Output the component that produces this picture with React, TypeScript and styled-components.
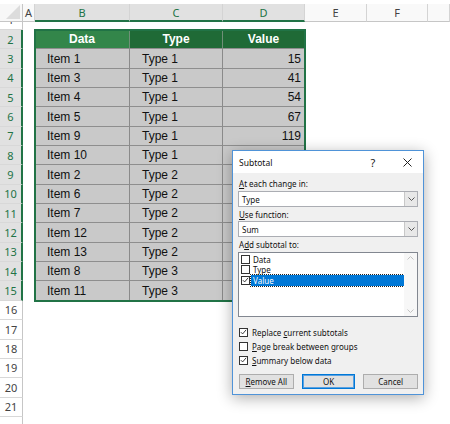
import { Fragment } from "react";
import styled, { createGlobalStyle } from "styled-components";

const GlobalStyle = createGlobalStyle`
  html, body {
    margin: 0;
    padding: 0;
    background: #ffffff;
  }
  body {
    width: 450px;
    height: 424px;
    overflow: hidden;
    font-family: "Liberation Sans", Arial, sans-serif;
  }
`;

const ROW_H = 19.35;
const GREEN = "#217346";
const UI_FONT = `"Noto Sans", "Open Sans", sans-serif`;

const Screen = styled.div`
  position: relative;
  width: 450px;
  height: 424px;
  overflow: hidden;
  background: #ffffff;
`;

const Sheet = styled.div`
  display: grid;
  grid-template-columns: 23px 12px 95px 93px 82px 62px 61px 1fr;
  grid-template-rows: 4px 18px 8px repeat(21, ${ROW_H}px);
`;

const TopGap = styled.div`
  grid-column: 1 / -1;
`;

const Corner = styled.div`
  position: relative;
  background: #f7f7f7;
  border-right: 1px solid #c6c6c6;
  border-bottom: 1px solid #c6c6c6;
  box-sizing: border-box;
  &::after {
    content: "";
    position: absolute;
    right: 2px;
    bottom: 2px;
    width: 0;
    height: 0;
    border-left: 14px solid transparent;
    border-bottom: 14px solid #dcdcdc;
  }
`;

const ColHead = styled.div<{ $sel?: boolean }>`
  box-sizing: border-box;
  display: flex;
  align-items: center;
  justify-content: center;
  font-family: ${UI_FONT};
  font-size: 11px;
  color: ${(p) => (p.$sel ? GREEN : "#444")};
  background: ${(p) => (p.$sel ? "#e1e1e1" : "#f9f9f9")};
  border-right: 1px solid #d4d4d4;
  border-bottom: ${(p) => (p.$sel ? `2px solid ${GREEN}` : "1px solid #c6c6c6")};
`;

const RowHead = styled.div<{ $sel?: boolean; $partial?: boolean }>`
  box-sizing: border-box;
  display: flex;
  justify-content: center;
  align-items: ${(p) => (p.$partial ? "flex-end" : "center")};
  overflow: hidden;
  font-family: ${UI_FONT};
  font-size: 11px;
  color: ${(p) => (p.$sel ? GREEN : "#444")};
  background: ${(p) => (p.$sel ? "#e1e1e1" : "#ffffff")};
  border-right: ${(p) => (p.$sel ? `2px solid ${GREEN}` : "1px solid #c6c6c6")};
  border-bottom: 1px solid #d8d8d8;
`;

const RowNum = styled.span`
  flex-shrink: 0;
  line-height: ${ROW_H}px;
`;

const Cell = styled.div`
  background: #ffffff;
`;

const DataTable = styled.div`
  grid-column: 3 / 6;
  grid-row: 4 / span 14;
  display: grid;
  grid-template-columns: 95px 93px 82px;
  grid-template-rows: repeat(14, 1fr);
  outline: 2px solid ${GREEN};
  outline-offset: -1px;
  position: relative;
  z-index: 1;
`;

const HeadCell = styled.div<{ $active?: boolean }>`
  box-sizing: border-box;
  display: flex;
  align-items: center;
  justify-content: center;
  font-size: 12px;
  font-weight: bold;
  color: #ffffff;
  background: ${(p) => (p.$active ? "#33864a" : "#1f6a36")};
  border-right: 1px solid #6f8f78;
  border-bottom: 1px solid #8e8e8e;
`;

const DataCell = styled.div<{ $num?: boolean; $first?: boolean }>`
  box-sizing: border-box;
  display: flex;
  align-items: center;
  justify-content: ${(p) => (p.$num ? "flex-end" : "flex-start")};
  padding: ${(p) => (p.$num ? "0 3px 0 0" : "0 0 0 12px")};
  font-size: 12px;
  color: #111;
  background: #c9c9c9;
  border-right: 1px solid #8a8a8a;
  border-bottom: 1px solid #8e8e8e;
  box-shadow: ${(p) => (p.$first ? "inset 1px 0 0 #f4f4f4" : "none")};
`;

/* ---------- dialog ---------- */

const Dialog = styled.div`
  position: absolute;
  left: 232px;
  top: 150px;
  width: 192px;
  height: 245px;
  box-sizing: border-box;
  border: 1px solid #4f93d8;
  background: #f0f0f0;
  box-shadow: 0 3px 14px rgba(0, 0, 0, 0.32);
  display: flex;
  flex-direction: column;
  font-family: ${UI_FONT};
  font-size: 8px;
  color: #111;
  z-index: 5;
`;

const TitleBar = styled.div`
  height: 22px;
  flex-shrink: 0;
  background: #ffffff;
  display: flex;
  align-items: center;
  padding-left: 6px;
`;

const Title = styled.div`
  flex: 1;
  font-size: 8.5px;
  color: #111;
`;

const TitleButton = styled.div<{ $w: number }>`
  width: ${(p) => p.$w}px;
  height: 22px;
  display: flex;
  align-items: center;
  justify-content: center;
  font-size: 11px;
  color: #222;
`;

const Body = styled.div`
  flex: 1;
  display: flex;
  flex-direction: column;
  padding: 0 5px 0 5px;
`;

const Label = styled.div<{ $mt: number }>`
  margin-top: ${(p) => p.$mt}px;
  height: 12px;
  line-height: 12px;
  padding-left: 1px;
  white-space: nowrap;
`;

const Key = styled.span`
  text-decoration: underline;
  text-underline-offset: 1px;
`;

const Combo = styled.div<{ $mt: number }>`
  margin-top: ${(p) => p.$mt}px;
  height: 16px;
  box-sizing: border-box;
  border: 1px solid #abadb3;
  background: #ffffff;
  display: flex;
  align-items: stretch;
`;

const ComboText = styled.div`
  flex: 1;
  display: flex;
  align-items: center;
  padding-left: 3px;
`;

const ComboButton = styled.div`
  width: 12px;
  border-left: 1px solid #c8c8c8;
  background: #e8e8e8;
  display: flex;
  align-items: center;
  justify-content: center;
`;

const ListBox = styled.div`
  margin-top: 1px;
  height: 65px;
  box-sizing: border-box;
  border: 1px solid #828790;
  background: #ffffff;
  display: flex;
`;

const ListItems = styled.div`
  flex: 1;
  padding-top: 1px;
  display: flex;
  flex-direction: column;
`;

const ListItem = styled.div`
  height: 10.5px;
  display: flex;
  align-items: center;
  padding-left: 2px;
`;

const ItemLabel = styled.span<{ $sel?: boolean }>`
  flex: 1;
  height: 100%;
  display: flex;
  align-items: center;
  margin-left: 1px;
  padding-left: 2px;
  background: ${(p) => (p.$sel ? "#0078d7" : "transparent")};
  color: ${(p) => (p.$sel ? "#ffffff" : "#111")};
  outline: ${(p) => (p.$sel ? "1px dotted #222" : "none")};
`;

const ScrollBar = styled.div`
  width: 13px;
  background: #f7f7f7;
  display: flex;
  flex-direction: column;
  justify-content: space-between;
  align-items: center;
  padding: 3px 0;
`;

const Box = styled.div<{ $size: number }>`
  width: ${(p) => p.$size}px;
  height: ${(p) => p.$size}px;
  box-sizing: border-box;
  border: 1px solid #333;
  background: #ffffff;
  flex-shrink: 0;
  display: flex;
  align-items: center;
  justify-content: center;
`;

const Options = styled.div`
  margin-top: 8px;
  display: flex;
  flex-direction: column;
`;

const OptionRow = styled.div`
  height: 14px;
  display: flex;
  align-items: center;
  padding-left: 1px;
  gap: 4px;
  white-space: nowrap;
`;

const Buttons = styled.div`
  margin-top: 7px;
  display: flex;
  gap: 8px;
  padding-left: 1px;
`;

const Button = styled.div<{ $w: number; $default?: boolean }>`
  width: ${(p) => p.$w}px;
  height: 15px;
  box-sizing: border-box;
  border: 1px solid ${(p) => (p.$default ? "#0078d7" : "#adadad")};
  box-shadow: ${(p) => (p.$default ? "inset 0 0 0 1px #5aa0e0" : "none")};
  background: #e1e1e1;
  display: flex;
  align-items: center;
  justify-content: center;
`;

const Check = () => (
  <svg width="8" height="8" viewBox="0 0 8 8">
    <polyline points="1,4.2 3,6.2 7,1.5" fill="none" stroke="#222" strokeWidth="1" />
  </svg>
);

const Chevron = ({ up, color }: { up?: boolean; color: string }) => (
  <svg width="7" height="4" viewBox="0 0 7 4">
    <polyline
      points={up ? "0.5,3.5 3.5,0.5 6.5,3.5" : "0.5,0.5 3.5,3.5 6.5,0.5"}
      fill="none"
      stroke={color}
      strokeWidth="1"
    />
  </svg>
);

const rows: [string, string, number][] = [
  ["Item 1", "Type 1", 15],
  ["Item 3", "Type 1", 41],
  ["Item 4", "Type 1", 54],
  ["Item 5", "Type 1", 67],
  ["Item 9", "Type 1", 119],
  ["Item 10", "Type 1", 0],
  ["Item 2", "Type 2", 0],
  ["Item 6", "Type 2", 0],
  ["Item 7", "Type 2", 0],
  ["Item 12", "Type 2", 0],
  ["Item 13", "Type 2", 0],
  ["Item 8", "Type 3", 0],
  ["Item 11", "Type 3", 0],
];

const letters = ["A", "B", "C", "D", "E", "F", "G"];

const App = () => {
  const sheetRows: number[] = [];
  for (let r = 2; r <= 22; r++) sheetRows.push(r);

  return (
    <Screen>
      <GlobalStyle />
      <Sheet>
        <TopGap />
        <Corner />
        {letters.map((l) => (
          <ColHead key={l} $sel={l === "B" || l === "C" || l === "D"}>
            {l === "G" ? "" : l}
          </ColHead>
        ))}

        <RowHead $partial>
          <RowNum>1</RowNum>
        </RowHead>
        {letters.map((l) => (
          <Cell key={"r1" + l} />
        ))}

        <DataTable>
          <HeadCell $active>Data</HeadCell>
          <HeadCell>Type</HeadCell>
          <HeadCell>Value</HeadCell>
          {rows.map(([item, type, value]) => (
            <Fragment key={item}>
              <DataCell $first>{item}</DataCell>
              <DataCell>{type}</DataCell>
              <DataCell $num>{value ? value : ""}</DataCell>
            </Fragment>
          ))}
        </DataTable>

        {sheetRows.map((r) => {
          const inTable = r <= 15;
          return (
            <Fragment key={r}>
              <RowHead $sel={inTable}>
                <RowNum>{r < 22 ? r : ""}</RowNum>
              </RowHead>
              <Cell />
              {!inTable && (
                <>
                  <Cell />
                  <Cell />
                  <Cell />
                </>
              )}
              <Cell />
              <Cell />
              <Cell />
            </Fragment>
          );
        })}
      </Sheet>

      <Dialog>
        <TitleBar>
          <Title>Subtotal</Title>
          <TitleButton $w={36}>?</TitleButton>
          <TitleButton $w={32}>
            <svg width="9" height="9" viewBox="0 0 9 9">
              <path d="M0.5 0.5 L8.5 8.5 M8.5 0.5 L0.5 8.5" stroke="#222" strokeWidth="1" />
            </svg>
          </TitleButton>
        </TitleBar>
        <Body>
          <Label $mt={5}>
            <Key>A</Key>t each change in:
          </Label>
          <Combo $mt={1}>
            <ComboText>Type</ComboText>
            <ComboButton>
              <Chevron color="#555" />
            </ComboButton>
          </Combo>
          <Label $mt={2}>
            <Key>U</Key>se function:
          </Label>
          <Combo $mt={0}>
            <ComboText>Sum</ComboText>
            <ComboButton>
              <Chevron color="#555" />
            </ComboButton>
          </Combo>
          <Label $mt={2}>
            A<Key>d</Key>d subtotal to:
          </Label>
          <ListBox>
            <ListItems>
              <ListItem>
                <Box $size={9} />
                <ItemLabel>Data</ItemLabel>
              </ListItem>
              <ListItem>
                <Box $size={9} />
                <ItemLabel>Type</ItemLabel>
              </ListItem>
              <ListItem>
                <Box $size={9}>
                  <Check />
                </Box>
                <ItemLabel $sel>Value</ItemLabel>
              </ListItem>
            </ListItems>
            <ScrollBar>
              <Chevron up color="#c2c2c2" />
              <Chevron color="#c2c2c2" />
            </ScrollBar>
          </ListBox>
          <Options>
            <OptionRow>
              <Box $size={9}>
                <Check />
              </Box>
              <span>
                Replace <Key>c</Key>urrent subtotals
              </span>
            </OptionRow>
            <OptionRow>
              <Box $size={9} />
              <span>
                <Key>P</Key>age break between groups
              </span>
            </OptionRow>
            <OptionRow>
              <Box $size={9}>
                <Check />
              </Box>
              <span>
                <Key>S</Key>ummary below data
              </span>
            </OptionRow>
          </Options>
          <Buttons>
            <Button $w={55}>
              <span>
                <Key>R</Key>emove All
              </span>
            </Button>
            <Button $w={54} $default>
              OK
            </Button>
            <Button $w={55}>Cancel</Button>
          </Buttons>
        </Body>
      </Dialog>
    </Screen>
  );
};

export default App;
